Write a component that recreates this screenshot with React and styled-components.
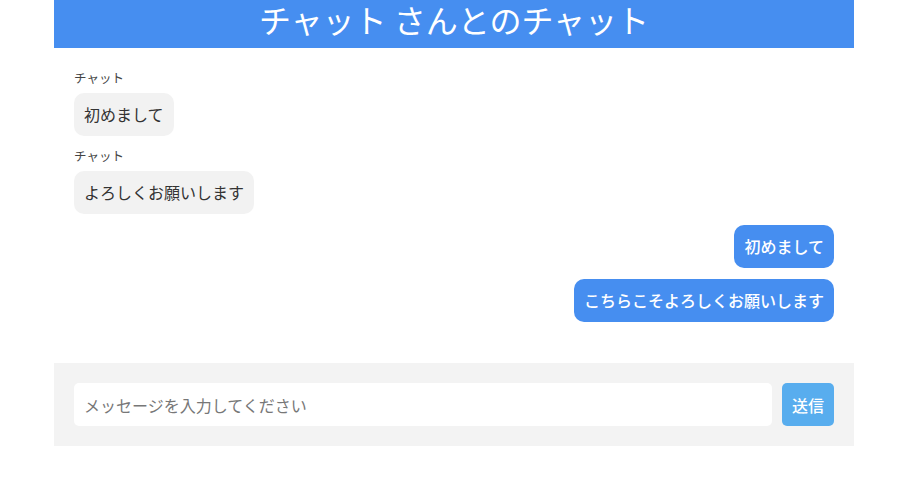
import React from "react";
import styled, { createGlobalStyle } from "styled-components";

const GlobalStyle = createGlobalStyle`
  body {
    margin: 0;
    padding-left: 4px;
    background: #ffffff;
    font-family: "Noto Sans CJK JP", "Noto Sans", sans-serif;
    color: #333333;
  }
`;

const messages = [
  { id: 1, from: "them", name: "チャット", text: "初めまして" },
  { id: 2, from: "them", name: "チャット", text: "よろしくお願いします" },
  { id: 3, from: "me", text: "初めまして" },
  { id: 4, from: "me", text: "こちらこそよろしくお願いします" },
];

const App = () => {
  return (
    <>
      <GlobalStyle />
      <Wrapper>
        <Header>
          <h1>チャット さんとのチャット</h1>
        </Header>
        <MessageList>
          {messages.map((m) => (
            <Message key={m.id} mine={m.from === "me" ? 1 : 0}>
              {m.name && <Sender>{m.name}</Sender>}
              <Bubble mine={m.from === "me" ? 1 : 0}>{m.text}</Bubble>
            </Message>
          ))}
        </MessageList>
        <InputBar>
          <TextInput placeholder="メッセージを入力してください" />
          <SendButton>送信</SendButton>
        </InputBar>
      </Wrapper>
    </>
  );
};

const Wrapper = styled.div`
  width: 800px;
  margin: 0 auto;
`;

const Header = styled.header`
  background: #468ef0;
  height: 48px;
  h1 {
    margin: 0;
    color: #ffffff;
    font-size: 32px;
    font-weight: normal;
    line-height: 38px;
    text-align: center;
  }
`;

const MessageList = styled.div`
  padding: 21px 20px 30px;
`;

const Message = styled.div`
  display: flex;
  flex-direction: column;
  align-items: ${(p) => (p.mine ? "flex-end" : "flex-start")};
  margin-bottom: 11px;
`;

const Sender = styled.div`
  font-size: 12.5px;
  line-height: 17px;
  color: #444444;
  margin-bottom: 7px;
`;

const Bubble = styled.div`
  padding: 10px;
  border-radius: 10px;
  font-size: 16px;
  line-height: 23px;
  background: ${(p) => (p.mine ? "#468ef0" : "#f2f2f2")};
  color: ${(p) => (p.mine ? "#ffffff" : "#333333")};
  font-weight: ${(p) => (p.mine ? 500 : 400)};
`;

const InputBar = styled.div`
  display: flex;
  gap: 10px;
  padding: 20px;
  background: #f3f3f3;
`;

const TextInput = styled.input`
  flex: 1;
  height: 43px;
  box-sizing: border-box;
  border: none;
  border-radius: 5px;
  padding: 0 10px;
  font-family: inherit;
  font-size: 16px;
  color: #333333;
  background: #ffffff;
  outline: none;
  &::placeholder {
    color: #777777;
  }
`;

const SendButton = styled.button`
  width: 52px;
  height: 43px;
  border: none;
  border-radius: 5px;
  background: #58adee;
  color: #ffffff;
  font-family: inherit;
  font-size: 16px;
  font-weight: 500;
  padding: 0;
`;

export default App;
